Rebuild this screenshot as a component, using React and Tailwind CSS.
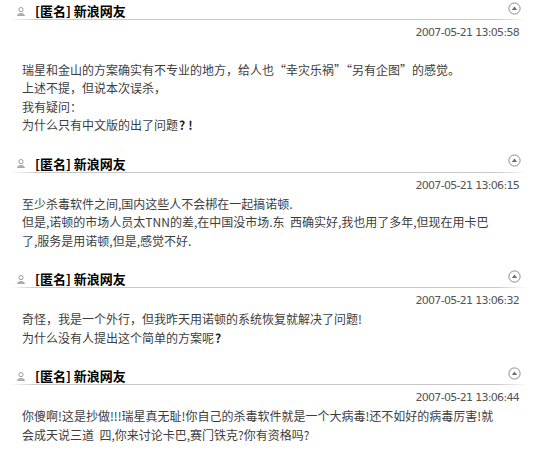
import React from 'react';

const POSTS = [
  {
    time: '2007-05-21 13:05:58',
    lines: [
      '',
      '瑞星和金山的方案确实有不专业的地方，给人也“幸灾乐祸”“另有企图”的感觉。',
      '上述不提，但说本次误杀，',
      '我有疑问：',
      <>为什么只有中文版的出了问题<b className="ml-[1px] font-bold tracking-[3px] text-[#222]">?!</b></>,
    ],
  },
  {
    time: '2007-05-21 13:06:15',
    lines: [
      '至少杀毒软件之间,国内这些人不会梆在一起搞诺顿.',
      '但是,诺顿的市场人员太TNN的差,在中国没市场.东  西确实好,我也用了多年,但现在用卡巴',
      '了,服务是用诺顿,但是,感觉不好.',
    ],
  },
  {
    time: '2007-05-21 13:06:32',
    lines: [
      '奇怪，我是一个外行，但我昨天用诺顿的系统恢复就解决了问题!',
      <>为什么没有人提出这个简单的方案呢<b className="ml-[1px] font-bold text-[#222]">?</b></>,
    ],
  },
  {
    time: '2007-05-21 13:06:44',
    lines: [
      '你傻啊!这是抄做!!!瑞星真无耻!你自己的杀毒软件就是一个大病毒!还不如好的病毒厉害!就',
      '会成天说三道  四,你来讨论卡巴,赛门铁克?你有资格吗?',
    ],
  },
];

const UserIcon = () => (
  <svg width="8" height="9" viewBox="0 0 8 9" className="shrink-0">
    <circle cx="4" cy="2.6" r="2.1" fill="none" stroke="#9a9a9a" strokeWidth="1" />
    <path d="M0.5 8.5 C0.8 5.8 7.2 5.8 7.5 8.5 Z" fill="#b5b5b5" stroke="#9a9a9a" strokeWidth="0.8" />
  </svg>
);

const TopIcon = () => (
  <svg width="13" height="13" viewBox="0 0 13 13" className="shrink-0">
    <circle cx="6.5" cy="6.5" r="5.6" fill="#fff" stroke="#8a8a8a" strokeWidth="1" />
    <path d="M3.8 8 L6.5 4.6 L9.2 8 Z" fill="#6f6f6f" />
  </svg>
);

const Post = ({ post }) => (
  <div className="pb-[21px]">
    {/* header */}
    <div className="h-[16px] flex items-center pl-[7px] pr-[7px]">
      <UserIcon />
      <span className="ml-[10px] text-[13px] leading-[16px] font-bold text-black">[匿名] 新浪网友</span>
      <span className="ml-auto -mt-[6px]">
        <TopIcon />
      </span>
    </div>
    <div className="h-px bg-[linear-gradient(to_right,#ffffff,#c9c9c9_5%,#c9c9c9_94%,#ffffff)]" />

    {/* date */}
    <div
      className="h-[22px] pt-[4px] pr-[9px] text-right text-[11px] leading-[17px] tracking-[-0.7px] text-[#555]"
      style={{ fontFamily: '"DejaVu Sans", "Liberation Sans", sans-serif' }}
    >
      {post.time}
    </div>

    {/* body */}
    <div className="pl-[12px] text-[12px] leading-[18.5px] text-[#3d3d3d] whitespace-pre">
      {post.lines.map((l, i) => (
        <div key={i} className="h-[18.5px]">{l}</div>
      ))}
    </div>
  </div>
);

export default function App() {
  return (
    <div
      className="w-[539px] h-[461px] overflow-hidden bg-white pt-[3px] pl-[10px] pr-[11px]"
      style={{ fontFamily: '"Noto Sans CJK SC", "Liberation Sans", sans-serif' }}
    >
      {POSTS.map((p, i) => (
        <Post key={i} post={p} />
      ))}
    </div>
  );
}
